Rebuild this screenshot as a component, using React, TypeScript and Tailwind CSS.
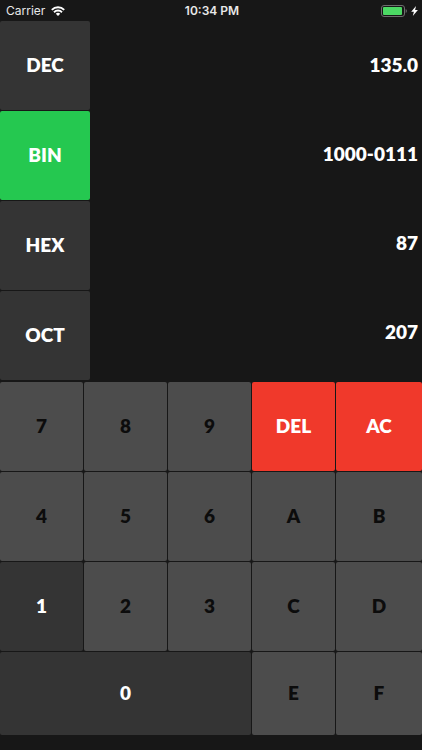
import { useState } from "react";
import clsx from "clsx";

const modes = [
    { name: "DEC", value: "135.0" },
    { name: "BIN", value: "1000-0111" },
    { name: "HEX", value: "87" },
    { name: "OCT", value: "207" },
];

const keys = [
    "7", "8", "9", "DEL", "AC",
    "4", "5", "6", "A", "B",
    "1", "2", "3", "C", "D",
    "0", "E", "F",
];

const allowed: Record<string, string> = {
    DEC: "0123456789",
    BIN: "01",
    HEX: "0123456789ABCDEF",
    OCT: "01234567",
};

function StatusBar() {
    return (
        <header className="grid h-5 grid-cols-3 items-center pt-0.5 pr-1 pl-1.5 font-['Inter','Liberation_Sans',sans-serif] text-xs font-normal text-[#e8e8e8]">
            <div className="flex items-center gap-1.5">
                <span>Carrier</span>
                <svg className="h-2.5 w-3.5" viewBox="0 0 14 10" fill="none" stroke="#fff" strokeWidth="1.9">
                    <path d="M0.8 3.8a8.8 8.8 0 0 1 12.4 0" />
                    <path d="M3 6.2a5.7 5.7 0 0 1 8 0" />
                    <path d="M7 10 4.8 7.8a3.1 3.1 0 0 1 4.4 0Z" fill="#fff" stroke="none" />
                </svg>
            </div>
            <span className="text-center font-semibold">10:34 PM</span>
            <div className="flex items-center justify-end gap-1">
                <svg className="h-3 w-[26px]" viewBox="0 0 26 12">
                    <rect x="0.5" y="0.5" width="23" height="11" rx="2.5" fill="none" stroke="#6d6d6d" />
                    <rect x="2" y="2" width="19" height="8" rx="1" fill="#4cd964" />
                    <path d="M24.7 4v4c.8-.4 1.2-1.1 1.2-2s-.4-1.6-1.2-2Z" fill="#6d6d6d" />
                </svg>
                <svg className="h-2.5 w-[7px]" viewBox="0 0 7 10" fill="#fff">
                    <path d="M5 0 0.2 5.8h2.7L1.8 10 6.9 4.1H4.1Z" />
                </svg>
            </div>
        </header>
    );
}

export default function App() {
    const [mode, setMode] = useState("BIN");

    return (
        <div className="min-h-screen bg-[#171717] font-['Lato','Liberation_Sans',sans-serif] text-[19px] font-extrabold text-white">
            <StatusBar />
            <main className="pt-px">
                <div className="flex">
                    <div className="grid w-[90px] gap-px">
                        {modes.map((m) => (
                            <button
                                key={m.name}
                                onClick={() => setMode(m.name)}
                                className={clsx(
                                    "h-[89px] cursor-pointer rounded-xs",
                                    mode === m.name ? "bg-[#25c850]" : "bg-[#343434]"
                                )}
                            >
                                {m.name}
                            </button>
                        ))}
                    </div>
                    <div className="flex-1 pr-1 text-right">
                        {modes.map((m) => (
                            <output key={m.name} className="flex h-[89px] items-center justify-end">
                                {m.value}
                            </output>
                        ))}
                    </div>
                </div>
                <div className="mt-0.5 grid grid-cols-[repeat(4,83fr)_86fr] gap-px">
                    {keys.map((key) => {
                        const action = key === "DEL" || key === "AC";
                        const enabled = action || allowed[mode].includes(key);
                        return (
                            <button
                                key={key}
                                disabled={!enabled}
                                className={clsx(
                                    "rounded-xs",
                                    "0EF".includes(key) ? "h-[83px]" : "h-[89px]",
                                    key === "0" && "col-span-3",
                                    action && "bg-[#f0392b]",
                                    !action && enabled && "bg-[#343434]",
                                    !enabled && "bg-[#4c4c4c] text-[#0c0c0c]"
                                )}
                            >
                                {key}
                            </button>
                        );
                    })}
                </div>
            </main>
        </div>
    );
}
